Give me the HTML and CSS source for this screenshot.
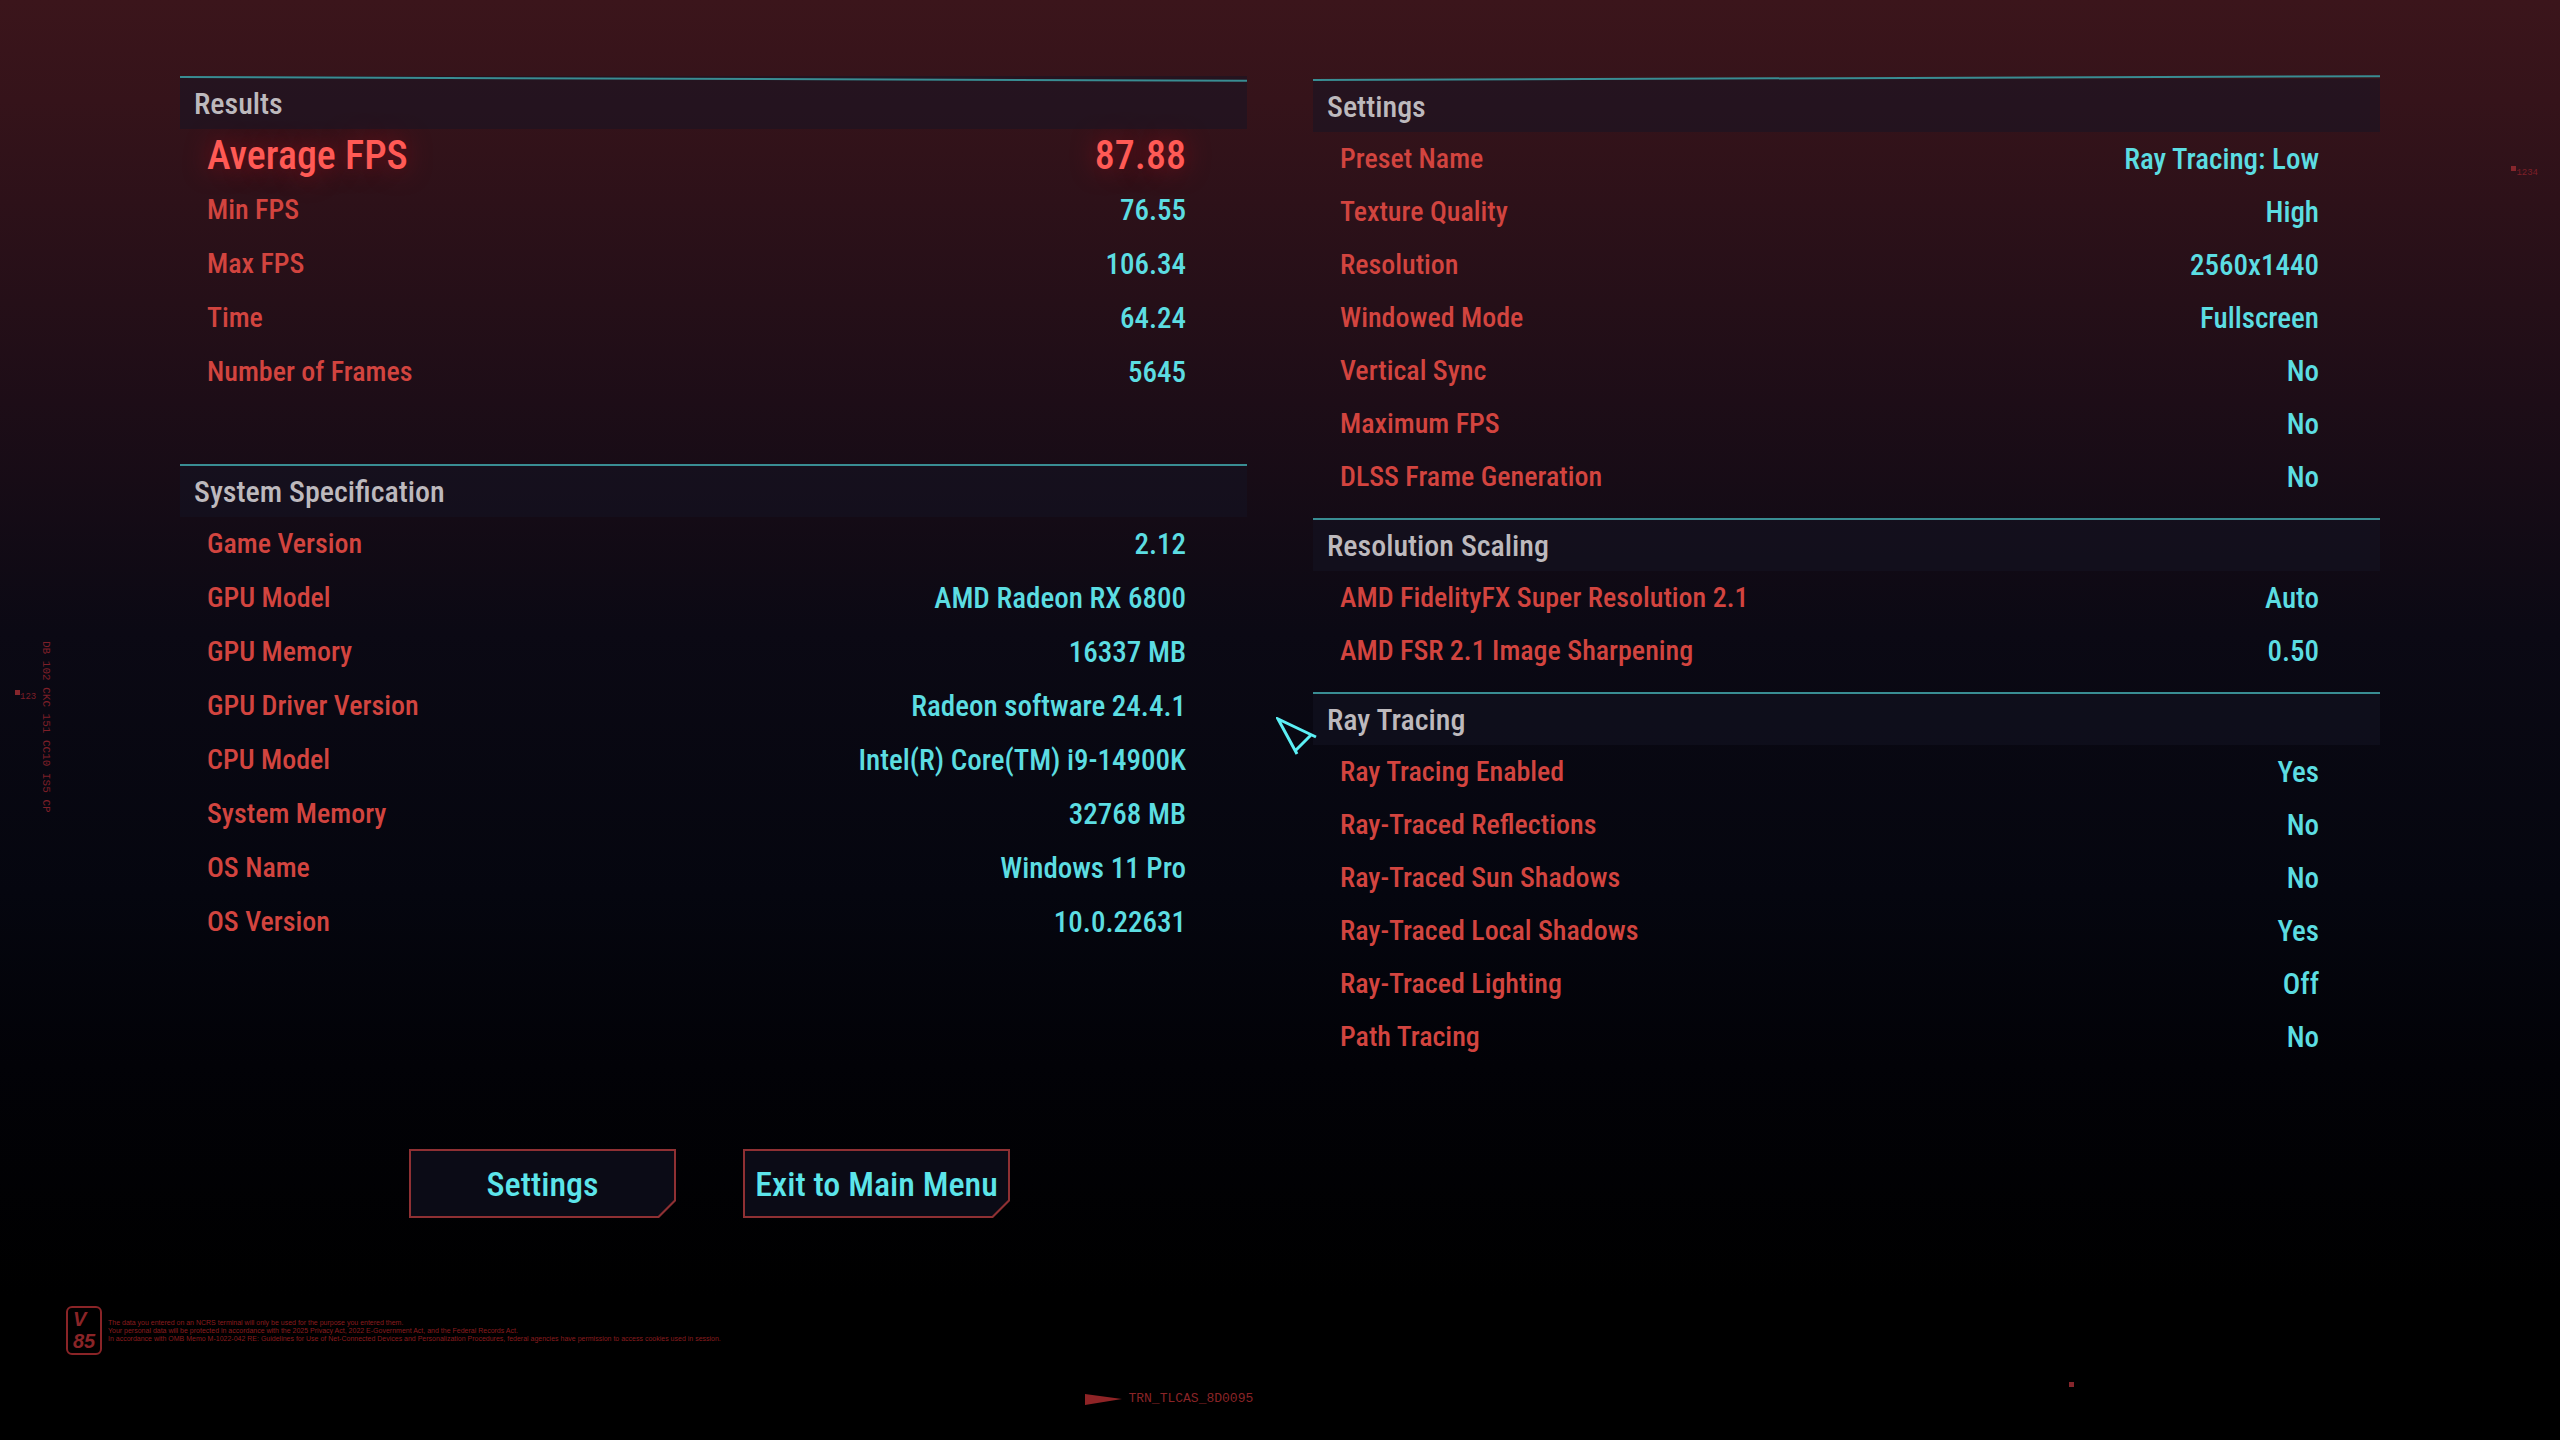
FILE: index.html
```html
<!DOCTYPE html>
<html lang="en">
<head>
    <meta charset="UTF-8">
    <meta name="viewport" content="width=device-width, initial-scale=1.0">
    <title>Benchmark Results</title>
    <link rel="stylesheet" href="styles.css">
</head>
<body>
    <main class="board">
        <div class="column column-left">
            <section class="panel tilt-down">
                <h2>Results</h2>
                <table>
                    <tr class="average"><th scope="row">Average FPS</th><td>87.88</td></tr>
                    <tr><th scope="row">Min FPS</th><td>76.55</td></tr>
                    <tr><th scope="row">Max FPS</th><td>106.34</td></tr>
                    <tr><th scope="row">Time</th><td>64.24</td></tr>
                    <tr><th scope="row">Number of Frames</th><td>5645</td></tr>
                </table>
            </section>
            <section class="panel">
                <h2>System Specification</h2>
                <table>
                    <tr><th scope="row">Game Version</th><td>2.12</td></tr>
                    <tr><th scope="row">GPU Model</th><td>AMD Radeon RX 6800</td></tr>
                    <tr><th scope="row">GPU Memory</th><td>16337 MB</td></tr>
                    <tr><th scope="row">GPU Driver Version</th><td>Radeon software 24.4.1</td></tr>
                    <tr><th scope="row">CPU Model</th><td>Intel(R) Core(TM) i9-14900K</td></tr>
                    <tr><th scope="row">System Memory</th><td>32768 MB</td></tr>
                    <tr><th scope="row">OS Name</th><td>Windows 11 Pro</td></tr>
                    <tr><th scope="row">OS Version</th><td>10.0.22631</td></tr>
                </table>
            </section>
            <div class="actions">
                <button type="button"><span>Settings</span></button>
                <button type="button"><span>Exit to Main Menu</span></button>
            </div>
        </div>
        <div class="column column-right">
            <section class="panel tilt-up">
                <h2>Settings</h2>
                <table>
                    <tr><th scope="row">Preset Name</th><td>Ray Tracing: Low</td></tr>
                    <tr><th scope="row">Texture Quality</th><td>High</td></tr>
                    <tr><th scope="row">Resolution</th><td>2560x1440</td></tr>
                    <tr><th scope="row">Windowed Mode</th><td>Fullscreen</td></tr>
                    <tr><th scope="row">Vertical Sync</th><td>No</td></tr>
                    <tr><th scope="row">Maximum FPS</th><td>No</td></tr>
                    <tr><th scope="row">DLSS Frame Generation</th><td>No</td></tr>
                </table>
            </section>
            <section class="panel">
                <h2>Resolution Scaling</h2>
                <table>
                    <tr><th scope="row">AMD FidelityFX Super Resolution 2.1</th><td>Auto</td></tr>
                    <tr><th scope="row">AMD FSR 2.1 Image Sharpening</th><td>0.50</td></tr>
                </table>
            </section>
            <section class="panel">
                <h2>Ray Tracing</h2>
                <table>
                    <tr><th scope="row">Ray Tracing Enabled</th><td>Yes</td></tr>
                    <tr><th scope="row">Ray-Traced Reflections</th><td>No</td></tr>
                    <tr><th scope="row">Ray-Traced Sun Shadows</th><td>No</td></tr>
                    <tr><th scope="row">Ray-Traced Local Shadows</th><td>Yes</td></tr>
                    <tr><th scope="row">Ray-Traced Lighting</th><td>Off</td></tr>
                    <tr><th scope="row">Path Tracing</th><td>No</td></tr>
                </table>
            </section>
        </div>
    </main>

    <footer class="footer">
        <div class="legal">
            <div class="badge"><span>V</span><span>85</span></div>
            <p>
                The data you entered on an NCRS terminal will only be used for the purpose you entered them.<br>
                Your personal data will be protected in accordance with the 2025 Privacy Act, 2022 E-Government Act, and the Federal Records Act.<br>
                In accordance with OMB Memo M-1022-042 RE: Guidelines for Use of Net-Connected Devices and Personalization Procedures, federal agencies have permission to access cookies used in session.
            </p>
        </div>
        <div class="terminal">
            <svg width="37" height="11" viewBox="0 0 37 11"><path d="M0 0L37 5L0 11Z" fill="#8f2426"/></svg>
            <span>TRN_TLCAS_8D0095</span>
        </div>
    </footer>

    <!-- hud marks over the screen -->
    <div class="mark mark-left"><i></i><span>123</span></div>
    <div class="side-code">DB 102 CKC 151 CC10 IS5 CP</div>
    <div class="mark mark-right"><i></i><span>1234</span></div>
    <div class="mark mark-bottom"><i></i></div>
    <svg class="cursor" width="42" height="40" viewBox="0 0 42 40">
        <path d="M40 20L2 2L21 37M35 18L20 33" fill="none" stroke="#5cf0f5" stroke-width="3"/>
    </svg>
</body>
</html>
```
FILE: styles.css
```css
*{
    box-sizing: border-box;
}
body,
h2,
p{
    margin: 0;
    padding: 0;
}
body{
    position: relative;
    min-height: 100vh;
    background: linear-gradient(#3b151b 0%, #35131a 7%, #1d0d17 28%, #0b0914 44%, #05060f 62%, #020207 74%, #000 90%) #000;
    font-family: "Roboto Condensed", "Liberation Sans Narrow", Roboto, sans-serif;
    font-size: 28px;
    font-weight: 500;
    color: #d2443f;
}
.board{
    display: grid;
    grid-template-columns: 1fr 1fr;
    column-gap: 66px;
    padding: 76px 180px 0;
}
.panel h2{
    height: 53px;
    font-size: 30px;
    font-weight: 500;
    line-height: 55px;
    color: #bdb9bd;
    padding-left: 14px;
    background-color: rgba(20, 19, 36, 0.5);
    position: relative;
}
.panel h2::before{
    content: "";
    position: absolute;
    top: 0;
    left: 0;
    width: 100%;
    height: 2px;
    background-color: #398d93;
}
/* the top panels lean towards the middle of the screen */
.tilt-down h2::before{
    transform: skewY(0.2deg);
    transform-origin: left;
}
.tilt-up h2::before{
    transform: skewY(-0.2deg);
    transform-origin: left;
}
.panel table{
    width: 100%;
    border-collapse: collapse;
}
.panel th,
.panel td{
    height: 53px;
    line-height: 40px;
    padding: 0;
}
.panel th{
    text-align: left;
    font-weight: 500;
    padding-left: 27px;
}
.panel td{
    text-align: right;
    font-size: 29px;
    padding-right: 61px;
    color: #5cdde2;
}
.column-left .panel + .panel{
    margin-top: 65px;
}
.column-left th,
.column-left td{
    height: 54px;
}
.column-right{
    padding-top: 3px;
}
.column-right .panel + .panel{
    margin-top: 15px;
}
.panel .average th,
.panel .average td{
    font-size: 40px;
    color: #ff5a55;
    text-shadow: 0 0 24px #80101a;
}
.actions{
    display: flex;
    justify-content: center;
    gap: 67px;
    padding-right: 8px;
    margin-top: 200px;
}
.actions button{
    position: relative;
    min-width: 267px;
    height: 69px;
    padding: 0 12px;
    border: none;
    font-family: inherit;
    font-size: 34px;
    font-weight: 500;
    color: #5ce5ea;
    background-color: #8f3033;
    clip-path: polygon(0 0, 100% 0, 100% calc(100% - 17px), calc(100% - 17px) 100%, 0 100%);
}
.actions button::before{
    content: "";
    position: absolute;
    top: 2px;
    right: 2px;
    bottom: 2px;
    left: 2px;
    background-color: #0b0b16;
    clip-path: polygon(0 0, 100% 0, 100% calc(100% - 16px), calc(100% - 16px) 100%, 0 100%);
}
.actions span{
    position: relative;
}
.footer{
    padding-top: 88px;
}
.legal{
    display: flex;
    align-items: center;
    gap: 6px;
    padding-left: 66px;
    color: #8a1c1f;
}
.badge{
    display: flex;
    flex-direction: column;
    width: 36px;
    height: 49px;
    padding-left: 5px;
    border: 2px solid #8a2427;
    border-radius: 6px;
    font: italic bold 20px/22px "Liberation Sans", sans-serif;
    color: #8a2427;
}
.legal p{
    font: 7px/8px "Liberation Sans", sans-serif;
}
.terminal{
    display: flex;
    align-items: center;
    gap: 6px;
    padding-left: 42.4%;
    margin-top: 36px;
    font: 13px/16px "Liberation Mono", monospace;
    color: #8a2427;
}
.mark,
.side-code,
.cursor{
    position: absolute;
}
.mark{
    display: flex;
    font: 9px/9px "Liberation Mono", monospace;
    color: #7d1f28;
}
.mark i{
    width: 5px;
    height: 5px;
    background-color: #86262c;
}
.mark span{
    padding-top: 3px;
}
.mark-left{
    top: 690px;
    left: 15px;
}
.mark-right{
    top: 166px;
    right: 22px;
}
.mark-bottom{
    top: 1382px;
    left: 2069px;
}
.side-code{
    top: 641px;
    left: 40px;
    writing-mode: vertical-rl;
    font: 11px/12px "Liberation Mono", monospace;
    color: #7d1f28;
}
.cursor{
    top: 717px;
    left: 1276px;
}
```
